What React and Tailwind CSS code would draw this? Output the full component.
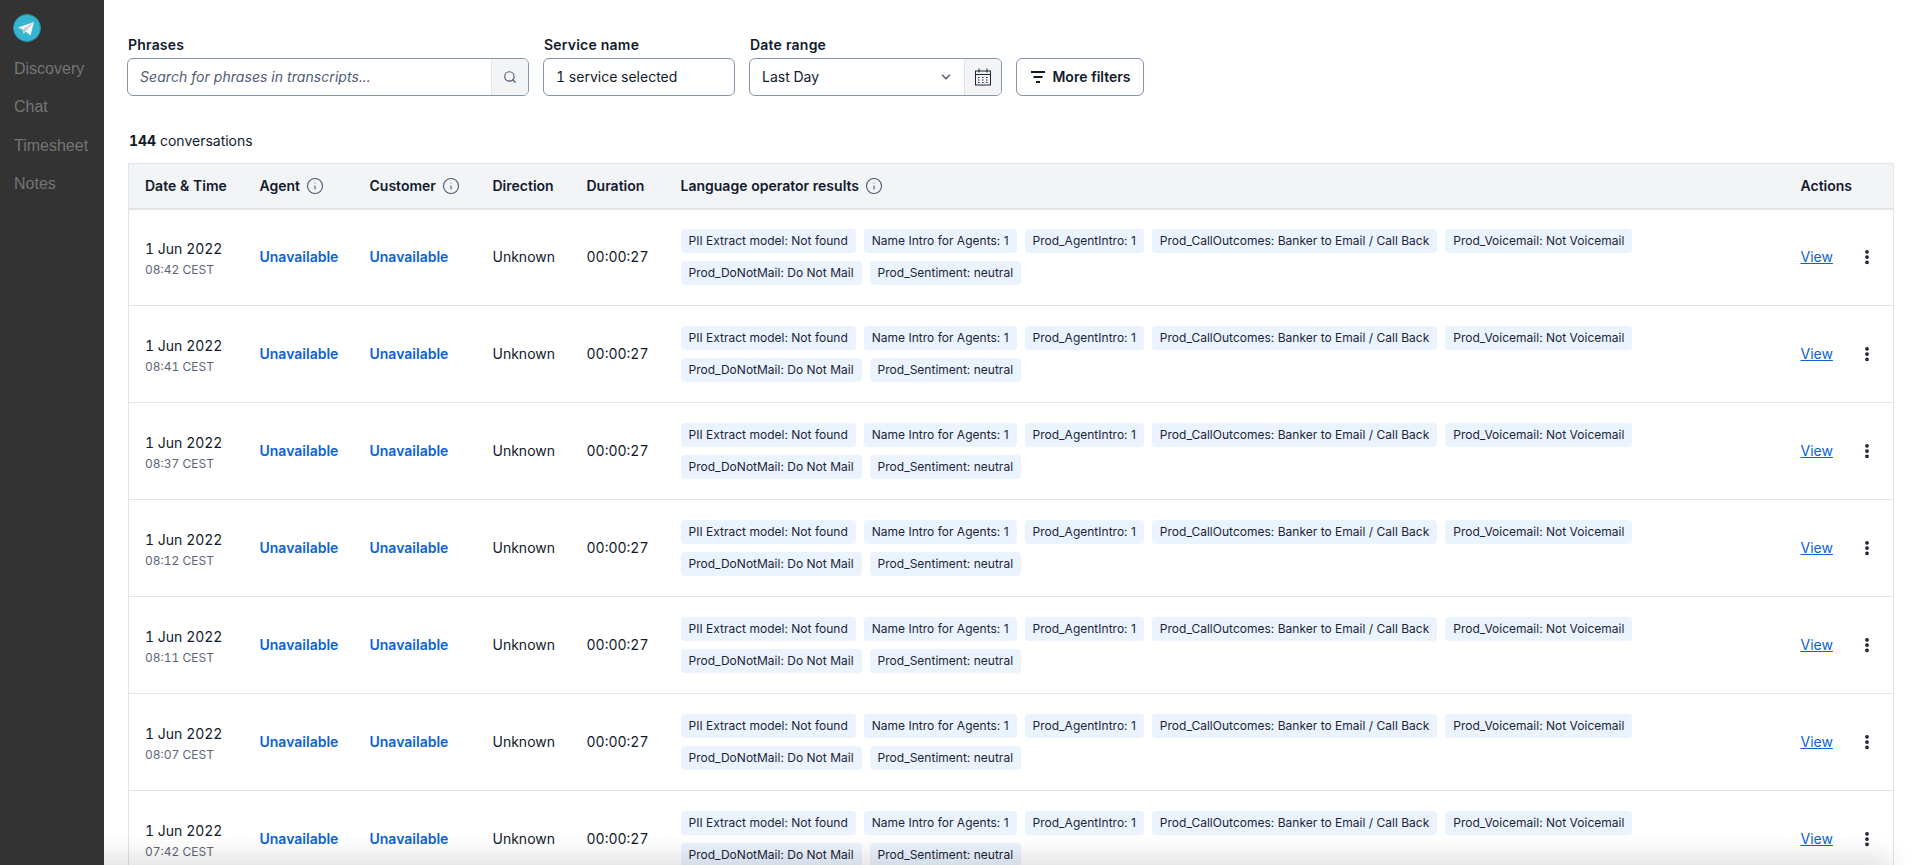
import { Search, ChevronDown, Info, MoreVertical } from 'lucide-react';

const rows = ['08:42', '08:41', '08:37', '08:12', '08:11', '08:07', '07:42'];

const tags = [
  'PII Extract model: Not found',
  'Name Intro for Agents: 1',
  'Prod_AgentIntro: 1',
  'Prod_CallOutcomes: Banker to Email / Call Back',
  'Prod_Voicemail: Not Voicemail',
  'Prod_DoNotMail: Do Not Mail',
  'Prod_Sentiment: neutral',
];

const navLinks = ['Discovery', 'Chat', 'Timesheet', 'Notes'];

function Logo() {
  return (
    <svg width="28" height="28" viewBox="0 0 28 28">
      <circle cx="14" cy="14" r="13.5" fill="#35b5d0" stroke="#2a8ea6" />
      <path d="M5 13.5 21 8 17.5 21.5 12.5 17.5 10.5 20 9.5 15.5z" fill="#f4f6f8" />
      <path d="M9.5 15.5 21 8 12.5 17.5 10.5 20z" fill="#c4ccd4" />
    </svg>
  );
}

function CalendarIcon() {
  return (
    <svg width="16" height="18" viewBox="0 0 16 18" fill="none" stroke="#1b2537" strokeWidth="1">
      <rect x="0.5" y="3" width="15" height="14" />
      <path d="M0.5 6.5h15M4 0.5v4M12 0.5v4" />
      <path d="M3 9.5h2M7 9.5h2M11 9.5h2M3 12h2M7 12h2M11 12h2M3 14.5h2M7 14.5h2M11 14.5h2" strokeDasharray="1.5 0.5" />
    </svg>
  );
}

function FilterIcon() {
  return (
    <svg width="14" height="12" viewBox="0 0 14 12" fill="none" stroke="#111a2c" strokeWidth="2">
      <path d="M0 1h14M2.5 6h9M5 11h4" />
    </svg>
  );
}

function HeaderCell({ label, info }) {
  return (
    <th className="px-4 text-left font-semibold">
      <span className="flex items-center gap-[6px] whitespace-nowrap">
        {label}
        {info && <Info size={18} strokeWidth={1.5} className="text-[#4f5b76]" />}
      </span>
    </th>
  );
}

function Row({ time }) {
  return (
    <tr className="h-[97px] border-t border-[#e3e4ea] first:border-t-0">
      <td className="px-4 pt-[3px]">
        <div className="whitespace-nowrap">1 Jun 2022</div>
        <div className="mt-[3px] text-xs text-[#5d6679] whitespace-nowrap">{time} CEST</div>
      </td>
      <td className="px-4 font-semibold text-[#0b62d6]">Unavailable</td>
      <td className="px-4 font-semibold text-[#0b62d6]">Unavailable</td>
      <td className="px-4">Unknown</td>
      <td className="px-4">00:00:27</td>
      <td className="px-4">
        <div className="flex flex-wrap gap-2">
          {tags.map((tag) => (
            <span key={tag} className="h-6 px-2 flex items-center rounded-sm bg-[#ebf3fe] text-xs normal-nums tracking-[0.01px] text-[#1b2537] whitespace-nowrap">
              {tag}
            </span>
          ))}
        </div>
      </td>
      <td className="px-4">
        <div className="flex items-center justify-between">
          <a href="#view" className="text-[#0b62d6] underline">View</a>
          <MoreVertical size={18} strokeWidth={3} className="mr-px text-[#111a2c]" />
        </div>
      </td>
    </tr>
  );
}

export default function App() {
  return (
    <div className="flex h-screen overflow-hidden bg-white text-sm tabular-nums text-[#111a2c] font-['Inter',sans-serif]">
      {/* Left nav */}
      <aside className="w-[104px] shrink-0 bg-[#333333] pl-[13px] pt-[14px] font-['Liberation_Sans',sans-serif]">
        <Logo />
        <nav className="mt-[8px] flex flex-col">
          {navLinks.map((link) => (
            <a key={link} href="#nav" className="h-[38.3px] flex items-center pl-px text-base text-[#757575]">
              {link}
            </a>
          ))}
        </nav>
      </aside>

      <main className="relative flex-1 min-w-0 overflow-hidden pl-[23px] pr-[21px] pt-[36px]">
        {/* Filters */}
        <div className="flex items-end gap-[14px]">
          <div className="w-[402px]">
            <label className="block mb-[5px] pl-px leading-[17px] font-semibold tracking-[0.2px]">Phrases</label>
            <div className="flex h-[38px] rounded-md border border-[#8792ad] overflow-hidden">
              <div className="flex-1 flex items-center px-3 italic tracking-[0.07px] text-[#4f5b76]">Search for phrases in transcripts...</div>
              <div className="w-[37px] flex items-center justify-center border-l border-[#e3e4ea] bg-[#f3f4f6]">
                <Search size={14} className="text-[#4f5b76]" />
              </div>
            </div>
          </div>
          <div className="w-[192px]">
            <label className="block mb-[5px] pl-px leading-[17px] font-semibold tracking-[0.2px]">Service name</label>
            <div className="flex h-[38px] items-center rounded-md border border-[#8792ad] px-3">1 service selected</div>
          </div>
          <div className="w-[253px]">
            <label className="block mb-[5px] pl-px leading-[17px] font-semibold tracking-[0.2px]">Date range</label>
            <div className="flex h-[38px] rounded-md border border-[#8792ad] overflow-hidden">
              <div className="flex-1 flex items-center justify-between pl-3 pr-[11px]">
                Last Day
                <ChevronDown size={14} strokeWidth={3} className="text-[#5d6679]" />
              </div>
              <div className="w-[37px] flex items-center justify-center border-l border-[#e3e4ea] bg-[#f3f4f6]">
                <CalendarIcon />
              </div>
            </div>
          </div>
          <button className="h-[38px] w-[128px] flex items-center justify-center gap-[7px] pl-[2px] rounded-md border border-[#8792ad] font-semibold">
            <FilterIcon />
            More filters
          </button>
        </div>

        <p className="mt-[36px] ml-[2px] leading-[17px]">
          <span className="font-bold">144</span> conversations
        </p>

        {/* Conversations */}
        <table className="mt-[14px] ml-[1px] w-[1766px] table-fixed border border-[#e3e4ea]">
          <colgroup>
            <col className="w-[115px]" />
            <col className="w-[110px]" />
            <col className="w-[123px]" />
            <col className="w-[94px]" />
            <col className="w-[94px]" />
            <col />
            <col className="w-[109px]" />
          </colgroup>
          <thead>
            <tr className="h-[45px] bg-[#f3f4f6] border-b-2 border-[#e3e4ea]">
              <HeaderCell label="Date & Time" />
              <HeaderCell label="Agent" info />
              <HeaderCell label="Customer" info />
              <HeaderCell label="Direction" />
              <HeaderCell label="Duration" />
              <HeaderCell label="Language operator results" info />
              <HeaderCell label="Actions" />
            </tr>
          </thead>
          <tbody>
            {rows.map((time) => (
              <Row key={time} time={time} />
            ))}
          </tbody>
        </table>

        {/* Bottom edge shadow, only over the main area */}
        <div className="absolute -left-10 right-[30px] -bottom-2 h-2 shadow-[0_0_26px_6px_rgba(0,0,0,0.16)] pointer-events-none" />
      </main>
    </div>
  );
}
